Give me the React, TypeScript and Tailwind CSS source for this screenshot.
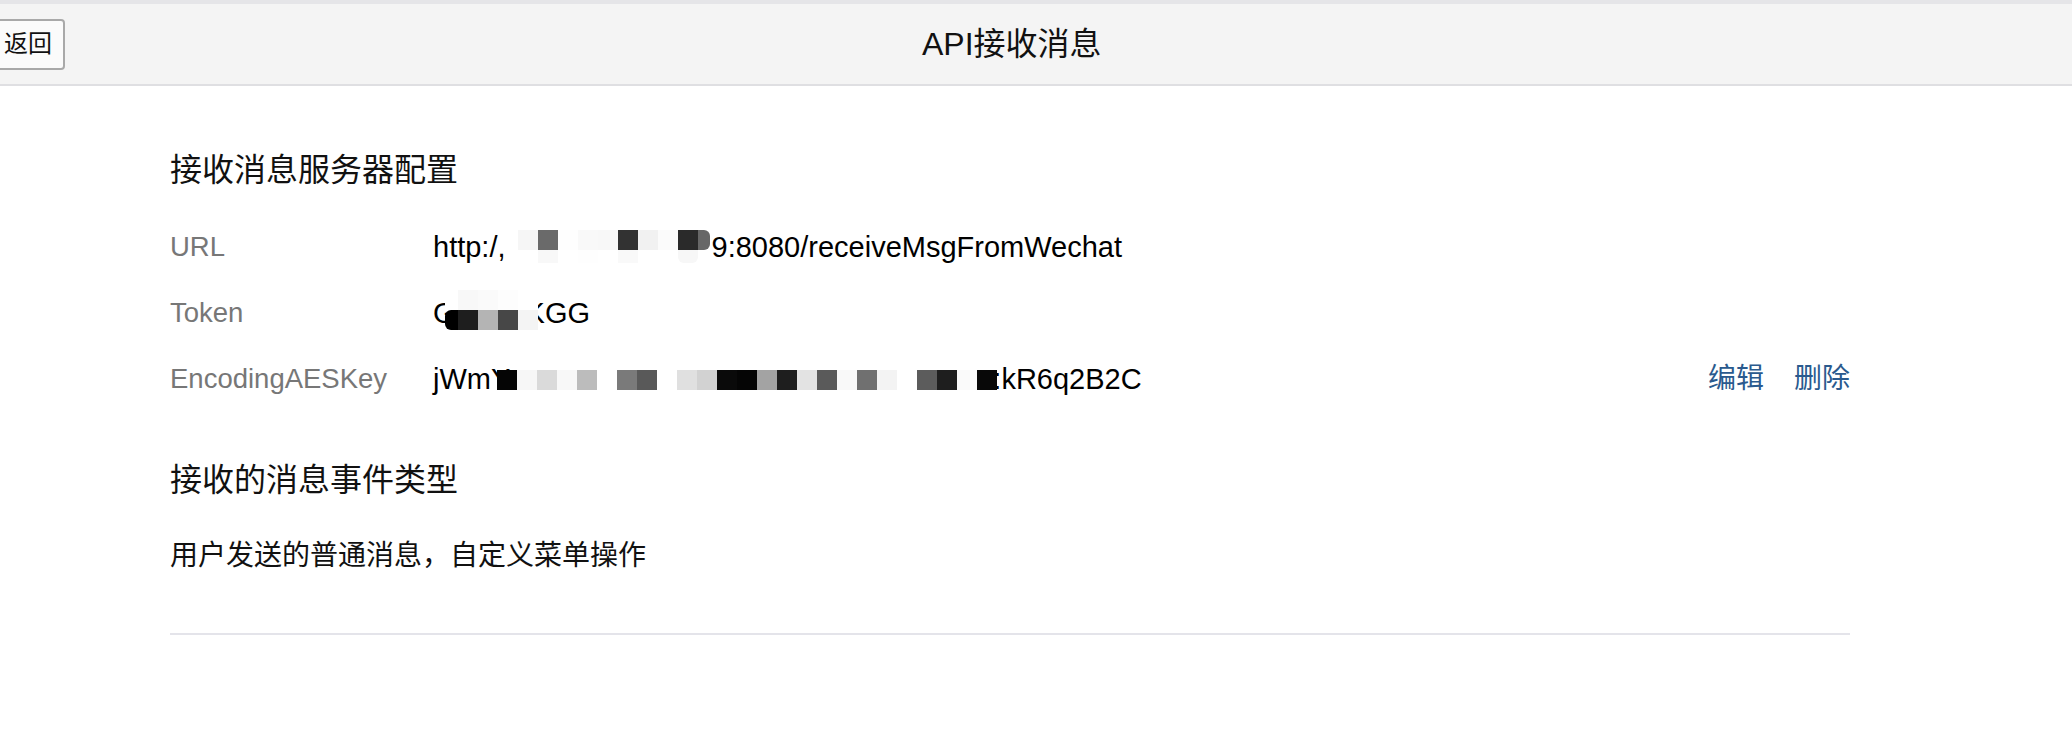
import React from "react";

type Cell = [number, string, string?];

const URL_ROWS: Cell[][] = [
  [
    [20, "#f6f6f6"],
    [20, "#6a6a6a"],
    [20, "#fefefe"],
    [20, "#f9f9f9"],
    [20, "#f8f8f8"],
    [20, "#323232"],
    [20, "#f1f1f1"],
    [20, "#fbfbfb"],
    [20, "#2a2a2a"],
    [12, "#676767", "rounded-r-[6px]"],
  ],
  [
    [20, "#ffffff"],
    [20, "#f8f8f8"],
    [20, "#ffffff"],
    [20, "#fefefe"],
    [20, "#ffffff"],
    [20, "#f9f9f9"],
    [20, "#ffffff"],
    [20, "#ffffff"],
    [20, "#f7f7f7", "rounded-b-[6px]"],
    [12, "#ffffff"],
  ],
];

const TOKEN_ROWS: Cell[][] = [
  [
    [13, "#ffffff"],
    [20, "#f8f8f8"],
    [20, "#fafafa"],
    [20, "#fdfdfd"],
    [20, "#ffffff"],
  ],
  [
    [13, "#000000", "rounded-l-[6px]"],
    [20, "#1e1e1e"],
    [20, "#b4b4b4"],
    [20, "#474747"],
    [20, "#f4f4f4"],
  ],
];

const AES_ROWS: Cell[][] = [
  [
    [20, "#050505"],
    [20, "#f7f7f7"],
    [20, "#dadada"],
    [20, "#f8f8f8"],
    [20, "#bcbcbc"],
    [20, "#ffffff"],
    [20, "#7a7a7a"],
    [20, "#595959"],
    [20, "#ffffff"],
    [20, "#e0e0e0"],
    [20, "#d2d2d2"],
    [20, "#0a0a0a"],
    [20, "#050505"],
    [20, "#a3a3a3"],
    [20, "#1e1e1e"],
    [20, "#e3e3e3"],
    [20, "#5a5a5a"],
    [20, "#f9f9f9"],
    [20, "#707070"],
    [20, "#f3f3f3"],
    [20, "#ffffff"],
    [20, "#5c5c5c"],
    [20, "#1e1e1e"],
    [20, "#fafafa"],
    [20, "#080808"],
  ],
];

function Mosaic({
  rows,
  heights,
  className,
}: {
  rows: Cell[][];
  heights: number[];
  className: string;
}) {
  return (
    <span className={"absolute flex flex-col " + className}>
      {rows.map((row, ri) => (
        <span key={ri} className="flex" style={{ height: heights[ri] }}>
          {row.map(([w, c, extra], ci) => (
            <span
              key={ci}
              className={"block h-full " + (extra ?? "")}
              style={{ width: w, backgroundColor: c }}
            />
          ))}
        </span>
      ))}
    </span>
  );
}

function Row({
  label,
  children,
  actions,
}: {
  label: string;
  children: React.ReactNode;
  actions?: boolean;
}) {
  return (
    <div className="h-[66px] flex items-center leading-none">
      <div className="w-[263px] text-[27.5px] text-[#777777]">{label}</div>
      <div className="relative self-stretch flex items-center text-[29px] text-black whitespace-nowrap">
        {children}
      </div>
      {actions && (
        <div className="ml-auto flex items-center gap-[30px] text-[28px] text-[#2a5a8e]">
          <span>编辑</span>
          <span>删除</span>
        </div>
      )}
    </div>
  );
}

export default function App() {
  return (
    <div className="w-[2072px] h-[734px] bg-white text-[#111111] font-['Liberation_Sans','Noto_Sans_CJK_SC',sans-serif]">
      <div className="h-[4px] bg-[#e5e5e8]" />
      <header className="h-[82px] bg-[#f4f4f4] border-b-2 border-[#dfdfe2] flex items-center">
        <button className="-ml-[11px] h-[51px] border-2 border-[#a9a9a9] rounded-[4px] bg-[#fbfbfb] pl-[13px] pr-[11px] text-[24px] leading-none text-[#111111]">
          返回
        </button>
        <h1 className="ml-[857px] text-[32px] leading-none font-normal">API接收消息</h1>
      </header>

      <main className="ml-[170px] w-[1680px] pt-[60px]">
        <h2 className="h-[48px] leading-[48px] text-[32px]">接收消息服务器配置</h2>
        <div className="mt-[20px]">
          <Row label="URL">
            <span>http:/,</span>
            <span className="inline-block w-[206px]" />
            <span>9:8080/receiveMsgFromWechat</span>
            <Mosaic rows={URL_ROWS} heights={[20, 13]} className="left-[85px] top-[16px]" />
          </Row>
          <Row label="Token">
            <span>G</span>
            <span className="inline-block w-[70px]" />
            <span>KGG</span>
            <Mosaic rows={TOKEN_ROWS} heights={[20, 20]} className="left-[12px] top-[10px]" />
          </Row>
          <Row label="EncodingAESKey" actions>
            <span>jWmY</span>
            <span className="inline-block w-[483px]" />
            <span>:kR6q2B2C</span>
            <Mosaic rows={AES_ROWS} heights={[20]} className="left-[64px] top-[24px]" />
          </Row>
        </div>

        <h2 className="mt-[44px] h-[48px] leading-[48px] text-[32px]">接收的消息事件类型</h2>
        <p className="mt-[31px] h-[42px] leading-[42px] text-[28px]">
          用户发送的普通消息，自定义菜单操作
        </p>
        <div className="mt-[56px] border-t-2 border-[#e4e4ea]" />
      </main>
    </div>
  );
}
